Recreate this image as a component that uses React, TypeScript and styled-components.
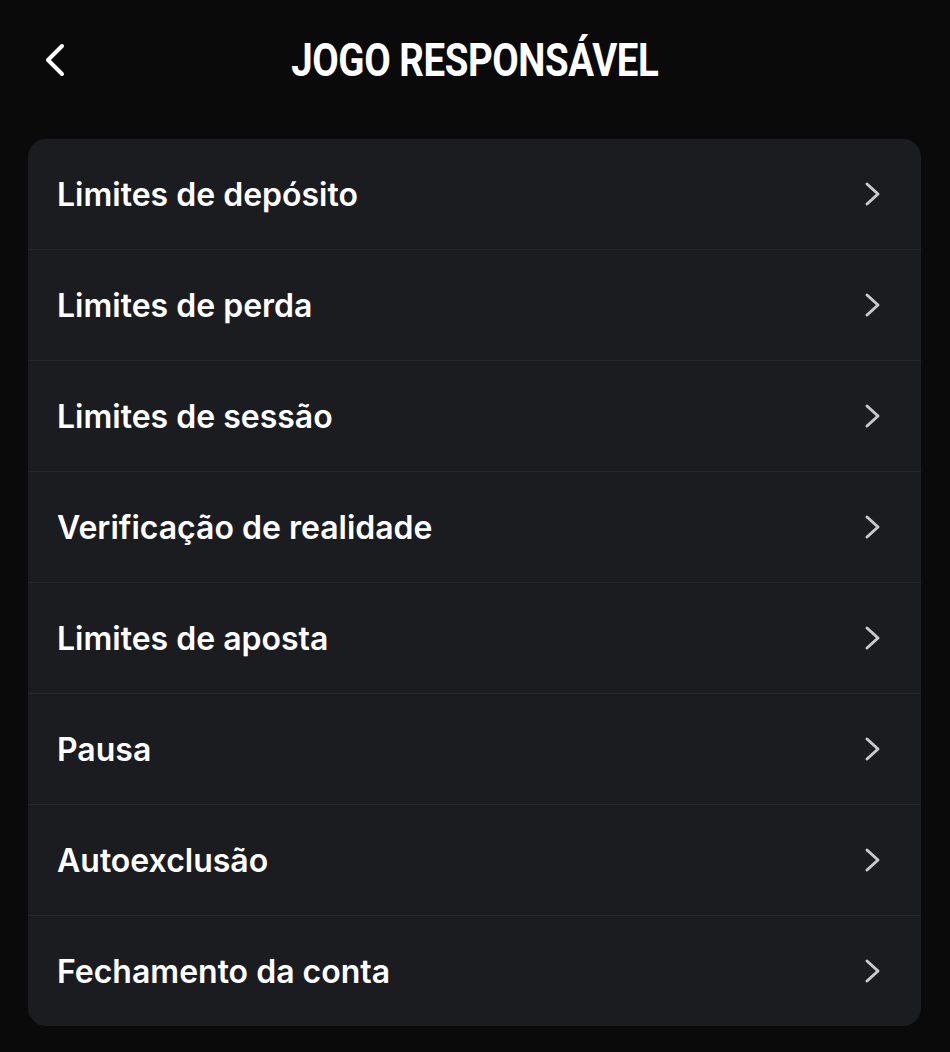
import React from 'react';
import styled, { createGlobalStyle } from 'styled-components';

const GlobalStyle = createGlobalStyle`
    html, body {
        margin: 0;
        padding: 0;
        background: #0a0a0a;
    }
    body {
        font-family: Inter, "Noto Sans", sans-serif;
        color: #ffffff;
    }
`

const items = [
    'Limites de depósito',
    'Limites de perda',
    'Limites de sessão',
    'Verificação de realidade',
    'Limites de aposta',
    'Pausa',
    'Autoexclusão',
    'Fechamento da conta'
];

const Page = styled.div`
    width: 950px;
    min-height: 1052px;
    box-sizing: border-box;
    padding: 0 29px 0 28px;
    display: flex;
    flex-direction: column;
`

const Header = styled.header`
    height: 139px;
    display: flex;
    align-items: center;
    justify-content: center;
    position: relative;
    padding-bottom: 20px;
    box-sizing: border-box;
`

const BackButton = styled.button`
    position: absolute;
    left: 12px;
    top: 41px;
    width: 30px;
    height: 38px;
    padding: 0;
    border: none;
    background: none;
    display: flex;
    align-items: center;
    justify-content: center;
    cursor: pointer;
`

const Title = styled.h1`
    margin: 0;
    font-family: Roboto, "Liberation Sans", sans-serif;
    font-weight: 700;
    font-size: 46px;
    letter-spacing: -0.5px;
    transform: scaleX(0.835);
    color: #ffffff;
`

const Card = styled.div`
    background: #1a1c1f;
    border-radius: 18px;
    overflow: hidden;
    display: flex;
    flex-direction: column;
`

const Row = styled.div`
    height: 110px;
    display: flex;
    align-items: center;
    justify-content: space-between;
    padding: 0 38px 0 29px;
    border-top: 1px solid #23262a;
    &:first-child {
        border-top: none;
    }
    cursor: pointer;
`

const Label = styled.span`
    font-size: 32px;
    font-weight: 600;
    letter-spacing: 0;
    color: #ffffff;
`

function Chevron(props: { dir: 'left' | 'right' }) {
    if (props.dir === 'left') {
        return (
            <svg width="22" height="34" viewBox="0 0 22 34" fill="none">
                <path d="M18 3 L4 17 L18 31" stroke="#ffffff" strokeWidth="4" strokeLinecap="round" strokeLinejoin="round" />
            </svg>
        );
    }
    return (
        <svg width="20" height="26" viewBox="0 0 20 26" fill="none">
            <path d="M4 3 L15 13 L4 23" stroke="#c9cacc" strokeWidth="3" strokeLinecap="round" strokeLinejoin="round" />
        </svg>
    );
}

function App() {
    return (
        <>
            <GlobalStyle />
            <Page>
                <Header>
                    <BackButton aria-label="Voltar">
                        <Chevron dir="left" />
                    </BackButton>
                    <Title>JOGO RESPONSÁVEL</Title>
                </Header>
                <Card>
                    {items.map((item) => (
                        <Row key={item}>
                            <Label>{item}</Label>
                            <Chevron dir="right" />
                        </Row>
                    ))}
                </Card>
            </Page>
        </>
    );
}

export default App;
